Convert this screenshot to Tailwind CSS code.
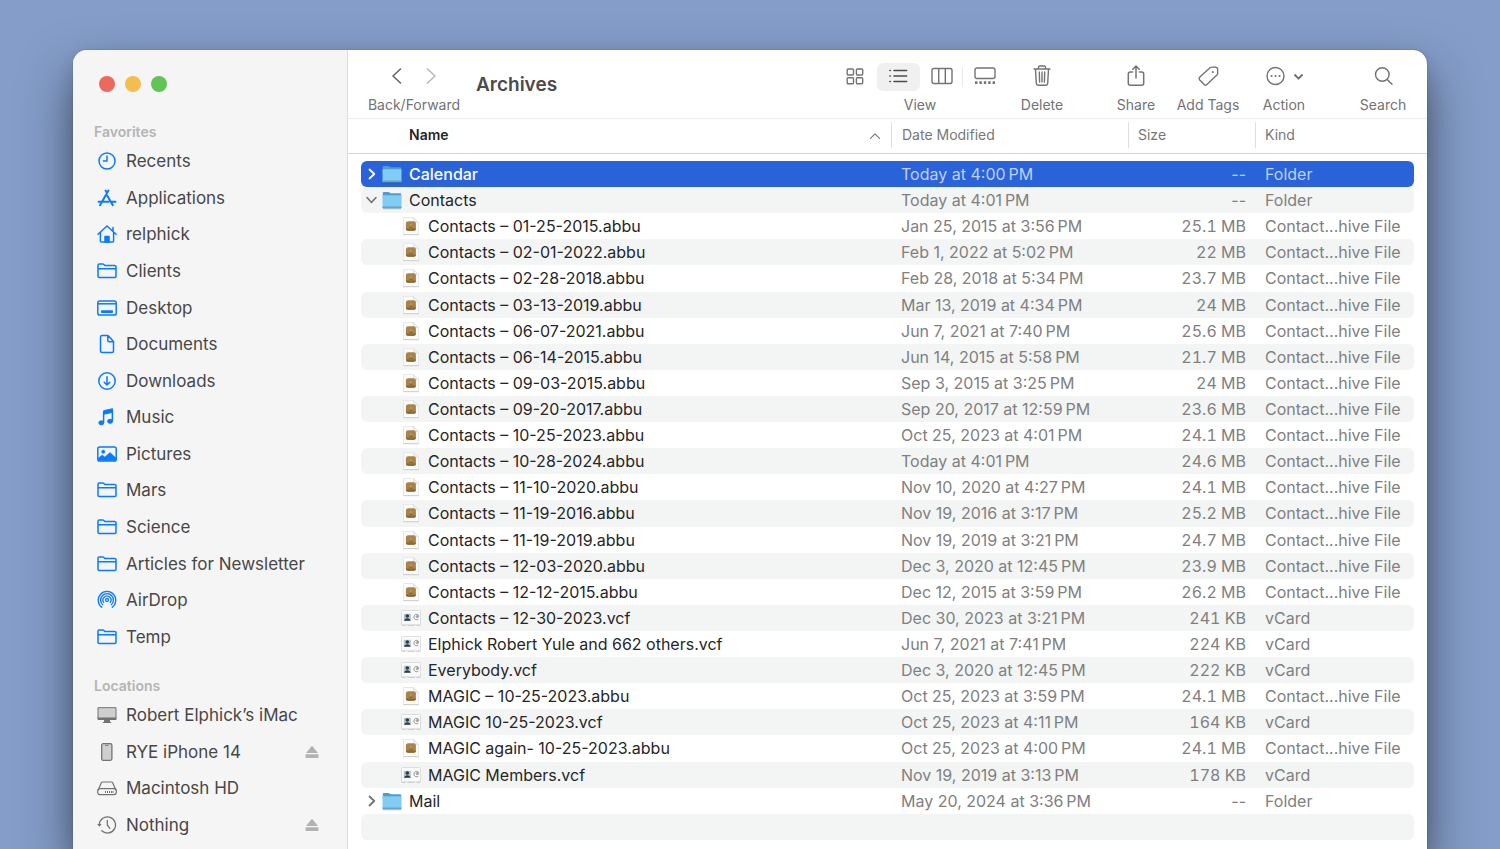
<!DOCTYPE html>
<html lang="en">
<head>
    <meta charset="UTF-8">
    <meta name="viewport" content="width=device-width, initial-scale=1.0">
    <title>Archives</title>
    <script src="https://cdn.jsdelivr.net/npm/@tailwindcss/browser@4"></script>
</head>
<body class="h-screen overflow-hidden bg-[#849dc9] px-[73px] pt-[50px] font-['Inter',sans-serif]">
    <!-- Shared icons -->
    <svg class="hidden">
        <symbol id="i-folder" viewBox="0 0 20 20"><path d="M1 15.300V4.200C1 3.400 1.500 3 2.200 3h3.600c.5 0 .8.2 1.100.5l.7.6c.2.2.5.3.8.3h9.200c.8 0 1.400.5 1.400 1.200v9.700c0 .8-.5 1.200-1.300 1.200H2.300C1.500 16.500 1 16 1 15.300ZM1 7.700h18"/></symbol>
        <symbol id="i-clock" viewBox="0 0 20 20"><circle cx="10" cy="10" r="8"/><path d="M10 4.500V10H5.800"/></symbol>
        <symbol id="i-apps" viewBox="0 0 20 20"><path d="M8.600 2.500 10 5l1.500-2.500M10 5 5.200 13.400M4.300 15 3 17.200M10.300 7.800l5.500 9.400M1.500 13.700h10M15 13.700h3.500" stroke-width="2" stroke-linecap="round"/></symbol>
        <symbol id="i-home" viewBox="0 0 20 20"><path d="M1 10.300 10 2l9 8.300M3.400 8.500v8.400c0 .6.4 1 1 1h11.200c.6 0 1-.4 1-1V8.500M16 7V3.600" stroke-linecap="round"/><path d="M8 18v-5.500h4V18Z" fill="currentColor"/></symbol>
        <symbol id="i-desktop" viewBox="0 0 20 20"><rect x=".8" y="3" width="18.400" height="14" rx="1.800"/><path d="M1 5.800h18"/><rect x="4.500" y="12.800" width="11" height="1.700" fill="currentColor" stroke-width="1"/></symbol>
        <symbol id="i-doc" viewBox="0 0 20 20"><path d="M11 1.500H5c-.9 0-1.500.6-1.500 1.500v14c0 .9.6 1.500 1.500 1.500h10c.9 0 1.500-.6 1.500-1.500V7.500ZM10.800 1.700V6.500c0 .8.400 1.200 1.200 1.200h4.300"/></symbol>
        <symbol id="i-down" viewBox="0 0 20 20"><circle cx="10" cy="10" r="8.200"/><path d="M10 5.800v8M7.200 11.200 10 14l2.800-2.800" stroke-linecap="round"/></symbol>
        <symbol id="i-music" viewBox="0 0 20 20"><path d="M6.600 3.700 15.500 1.700v3.600l-8.900 2Z" fill="currentColor" stroke-width="1"/><path d="M6.600 5v10.300M15.400 3v10.700"/><ellipse cx="4.300" cy="15.800" rx="2.500" ry="2" fill="currentColor" stroke-width="1"/><ellipse cx="13.100" cy="14.300" rx="2.500" ry="2" fill="currentColor" stroke-width="1"/></symbol>
        <symbol id="i-pic" viewBox="0 0 20 20"><rect x=".8" y="3" width="18.400" height="14" rx="1.800"/><circle cx="6.200" cy="7.700" r="1.600" fill="currentColor" stroke-width=".6"/><path d="M1 14.500 5.200 11l2.600 2L13 8.500l6 5.500v2.500H1.500Z" fill="currentColor" stroke-width=".5"/></symbol>
        <symbol id="i-airdrop" viewBox="0 0 20 20"><path d="M5.200 17.600a8.800 8.800 0 1 1 9.600 0M6 15.100a6.400 6.400 0 1 1 8 0M7 12.800a4 4 0 1 1 6 0" stroke-width="1.300"/><circle cx="10" cy="10" r="1.500" stroke-width="1.300"/></symbol>
        <symbol id="i-imac" viewBox="0 0 20 20"><path d="M1 2.700h18v10.800H1Z" fill="#cfcfcf" stroke-width="1"/><path d="M.5 12.500h19v1.700c0 .5-.4.800-.8.800h-5.900l.3 2h1v1H5.900v-1h1l.3-2H1.300c-.4 0-.8-.3-.8-.8Z" fill="currentColor" stroke="none"/></symbol>
        <symbol id="i-phone" viewBox="0 0 20 20"><rect x="4.700" y="1.700" width="10.200" height="16.600" rx="1.500" fill="#cfcfcf" stroke-width="1.300"/><path d="M8 3.300h3.600" stroke-width="1"/></symbol>
        <symbol id="i-disk" viewBox="0 0 20 20"><path d="M1 12.500 4.200 5c.3-.7.800-1 1.500-1h8.600c.7 0 1.200.3 1.500 1L19 12.500" stroke-width="1.200"/><rect x=".7" y="10.700" width="18.600" height="6" rx="2.400" stroke-width="1.200"/><path d="M8.500 13v2M10.500 13v2M12.500 13v2M14.500 13v2M16 13v2" stroke-width="1"/></symbol>
        <symbol id="i-history" viewBox="0 0 20 20"><path d="M2.300 10a8.100 8.100 0 1 1 2.500 5.800M10.300 5.300V10l2.500 3.300" stroke-width="1.300" stroke-linecap="round"/><path d="M.2 9h4.400l-2.200 2.800Z" fill="currentColor" stroke="none"/></symbol>
        <symbol id="i-eject" viewBox="0 0 14 14"><path d="M7 .8 13 8H1Z" fill="currentColor"/><rect x=".5" y="9.300" width="13" height="3.700" rx=".8" fill="currentColor"/></symbol>
        <symbol id="i-right" viewBox="0 0 12 14"><path d="M4 2.500 8.800 7 4 11.500" fill="none" stroke="currentColor" stroke-width="1.800" stroke-linecap="round" stroke-linejoin="round"/></symbol>
        <symbol id="i-open" viewBox="0 0 12 14"><path d="M1.500 4.500 6 9.500l4.500-5" fill="none" stroke="currentColor" stroke-width="1.600" stroke-linecap="round" stroke-linejoin="round"/></symbol>
        <symbol id="f-folder" viewBox="0 0 20 20"><path d="M.8 2.800c0-.6.300-.9.900-.9h4.700c.7 0 1 .3 1.500.9l.6.500h9.800c.6 0 .9.300.9.900V8H.8Z" fill="#4f9dc9"/><path d="M.5 5.200h19v12c0 .7-.3 1-1 1h-17c-.7 0-1-.3-1-1Z" fill="#82ccf4"/><path d="M.5 16.500h19v.9c0 .6-.3.900-1 .9h-17c-.7 0-1-.3-1-.9Z" fill="#5fa5cc"/><path d="M1 18.800h18" stroke="#000" stroke-opacity=".25" stroke-width=".8"/></symbol>
        <symbol id="f-abbu" viewBox="0 0 20 20"><path d="M2.500 1.500h10l5 5v12h-15Z" fill="#fcfcfc" stroke="#e2e2e2" stroke-width=".8"/><path d="M12.500 1.500v5h5Z" fill="#f0f0f0" stroke="#dadada" stroke-width=".6"/><path d="M2.300 18.700h15.400" stroke="#cdcdcd"/><rect x="4.900" y="5.200" width="10" height="9.600" rx="2.200" fill="#a98349"/><path d="M4.900 12.600h10c0 1.400-.8 2.200-2.200 2.200H7.100c-1.400 0-2.200-.8-2.200-2.200Z" fill="#8a6836"/><circle cx="9.900" cy="9" r="1.100" fill="#c09a5c"/><path d="M8 12c.3-1.800 3.500-1.800 3.800 0Z" fill="#8a6836"/></symbol>
        <symbol id="f-vcf" viewBox="0 0 20 20"><path d="M1.500 2.500h17c.6 0 1 .4 1 1V17h-4.200l-.8-1-.8 1H6.300l-.8-1-.8 1H.5V3.500c0-.6.4-1 1-1Z" fill="#fafafa" stroke="#d6d6d6" stroke-width=".8"/><path d="M.8 17.300h3.700M6.500 17.300h7M15.500 17.300h3.700" stroke="#c0c0c0" stroke-width=".8"/><rect x="2.800" y="5.800" width="7" height="7" fill="#b4c4cc"/><circle cx="6.300" cy="8" r="1.800" fill="#2b3c45"/><path d="M3.100 12.800c.2-3.400 6.200-3.400 6.400 0Z" fill="#2b3c45"/><path d="M17.300 11.200c-3 1.500-4.800-.8-4.200-3 .7-2.400 4.200-2.500 4.500-.1.100 1.500-1.300 2.100-1.200.7l.2-1.300c-1.600-.4-1.900 2.300-.7 2.100" fill="none" stroke="#777" stroke-width=".8"/></symbol>
    </svg>

    <div class="flex h-full overflow-hidden rounded-t-[14px] bg-white shadow-[0_0_1px_rgba(0,0,0,0.6),0_6px_16px_rgba(0,0,0,0.1),0_24px_50px_rgba(0,0,0,0.5)]">
        <!-- Sidebar -->
        <aside class="w-[275px] shrink-0 border-r border-[#dcdcdc] bg-[#f5f5f5] text-[#474747]">
            <div class="flex gap-[10px] pt-[26px] pl-[26px]">
                <button aria-label="Close" class="size-4 rounded-full bg-[#ed695e]"></button>
                <button aria-label="Minimize" class="size-4 rounded-full bg-[#f5bd4f]"></button>
                <button aria-label="Zoom" class="size-4 rounded-full bg-[#61c454]"></button>
            </div>
            <h2 class="mt-[31px] pl-[21px] text-sm leading-[18px] font-semibold text-[#b4b4b4]">Favorites</h2>
            <ul id="favorites" class="mt-[2px] flex h-[512px] flex-col"></ul>
            <h2 class="mt-[22px] pl-[21px] text-sm leading-[18px] font-semibold text-[#b4b4b4]">Locations</h2>
            <ul id="locations" class="mt-[2px] flex h-[146px] flex-col"></ul>
        </aside>

        <main class="min-w-0 flex-1">
            <!-- Toolbar -->
            <header class="flex h-[69px] border-b border-[#ececec] pr-5 pl-[19px] text-sm text-[#737373]">
                <div class="flex w-[94px] flex-col items-center pt-[11px]">
                    <div class="flex h-[30px] items-center gap-[14px]">
                        <button aria-label="Back"><svg class="size-5" viewBox="0 0 20 20" fill="none" stroke="#666666" stroke-width="1.600" stroke-linecap="round" stroke-linejoin="round"><path d="M13.500 3 6 10l7.500 7"/></svg></button>
                        <button aria-label="Forward"><svg class="size-5" viewBox="0 0 20 20" fill="none" stroke="#b9b9b9" stroke-width="1.600" stroke-linecap="round" stroke-linejoin="round"><path d="m6.500 3 7.500 7-7.500 7"/></svg></button>
                    </div>
                    <span class="mt-[5px] leading-[18px]">Back/Forward</span>
                </div>
                <h1 class="ml-[15px] pt-[23px] text-[19px] leading-6 font-semibold text-[#4b4b4b]">Archives</h1>

                <div class="ml-auto flex w-[172px] flex-col items-center pt-[13px]">
                    <div class="flex h-7 w-full text-[#737373]">
                        <button aria-label="Icon view" class="flex h-7 flex-1 items-center justify-center"><svg class="size-5" viewBox="0 0 20 20" fill="none" stroke="currentColor" stroke-width="1.400"><rect x="1.200" y="2" width="6.300" height="6" rx="1"/><rect x="10.400" y="2" width="6.300" height="6" rx="1"/><rect x="1.200" y="10.800" width="6.300" height="6" rx="1"/><rect x="10.400" y="10.800" width="6.300" height="6" rx="1"/></svg></button>
                        <button aria-label="List view" class="flex h-7 flex-1 items-center justify-center rounded-md bg-[#f0f0f0] text-[#4b4b4b]"><svg class="size-5" viewBox="0 0 20 20" fill="none" stroke="currentColor" stroke-width="1.600" stroke-linecap="round"><path d="M5 3.500h12.600M5 9h12.600M5 14.500h12.600M.9 3.500h.4M.9 9h.4M.9 14.500h.4"/></svg></button>
                        <button aria-label="Column view" class="relative flex h-7 flex-1 items-center justify-center after:absolute after:right-0 after:h-5 after:w-px after:bg-[#e8e8e8]"><svg class="h-5 w-[22px]" viewBox="0 0 22 20" fill="none" stroke="currentColor" stroke-width="1.400"><rect x="1" y="1.500" width="20" height="15" rx="2"/><path d="M7.700 1.500v15M14.300 1.500v15"/></svg></button>
                        <button aria-label="Gallery view" class="flex h-7 flex-1 items-center justify-center"><svg class="h-5 w-[22px]" viewBox="0 0 22 20" fill="none" stroke="currentColor" stroke-width="1.400"><rect x="1" y="1" width="20" height="10.500" rx="2"/><path d="M1 15.600h20" stroke-width="2.800" stroke-dasharray="2.400 2"/></svg></button>
                    </div>
                    <span class="mt-[5px] leading-[18px]">View</span>
                </div>

                <button class="ml-3 flex w-12 flex-col items-center pt-[11px]">
                    <svg class="my-[3px] size-6" viewBox="0 0 24 24" fill="none" stroke="currentColor" stroke-width="1.400" stroke-linecap="round" stroke-linejoin="round"><path d="M4 5h16M8.500 4.800V3.300c0-.8.500-1.300 1.300-1.300h4.400c.8 0 1.300.5 1.300 1.300v1.500M5.500 5.200l.8 14.300c.1 1.100.7 1.700 1.800 1.700h7.800c1.100 0 1.700-.6 1.800-1.700l.8-14.300M9.300 8l.3 10M12 8v10M14.700 8l-.3 10"/></svg>
                    <span class="mt-[5px] leading-[18px]">Delete</span>
                </button>
                <button class="ml-[46px] flex w-12 flex-col items-center pt-[11px]">
                    <svg class="my-[3px] size-6" viewBox="0 0 24 24" fill="none" stroke="currentColor" stroke-width="1.500" stroke-linecap="round" stroke-linejoin="round"><path d="M8.500 8H6.300C5 8 4.300 8.700 4.300 10v9.200c0 1.300.7 2 2 2h11.400c1.300 0 2-.7 2-2V10c0-1.300-.7-2-2-2h-2.200M12 14V2.200M8.800 5.200 12 2l3.200 3.200"/></svg>
                    <span class="mt-[5px] leading-[18px]">Share</span>
                </button>
                <button class="ml-3 flex w-[72px] flex-col items-center pt-[11px]">
                    <svg class="my-[3px] size-6" viewBox="0 0 24 24" fill="none" stroke="currentColor" stroke-width="1.400" stroke-linejoin="round"><path d="M14.300 3.500 3.600 13.300c-.8.800-.8 1.500-.1 2.400l4.700 4.900c.8.900 1.600.9 2.400.1L20.900 11c.6-.6.800-1.100.8-1.900l-.1-3.900c0-1.200-.6-1.900-1.800-1.900l-3.600-.2c-.8 0-1.300-.1-1.900.4Z"/><circle cx="16.800" cy="8" r="1" fill="currentColor" stroke="none"/></svg>
                    <span class="mt-[5px] leading-[18px] whitespace-nowrap">Add Tags</span>
                </button>
                <button class="ml-4 flex w-12 flex-col items-center pt-[11px]">
                    <svg class="my-[3px] h-6 w-10" viewBox="0 0 40 24" fill="none" stroke="currentColor" stroke-width="1.400" stroke-linecap="round" stroke-linejoin="round"><circle cx="11.500" cy="12" r="8.500"/><path d="M7.500 12h.1M11.500 12h.1M15.500 12h.1" stroke-width="2"/><path d="m31 11 3.500 3.700L38 11" stroke-width="1.900"/></svg>
                    <span class="mt-[5px] leading-[18px]">Action</span>
                </button>
                <button class="ml-[51px] flex w-12 flex-col items-center pt-[11px]">
                    <svg class="my-[3px] size-6" viewBox="0 0 24 24" fill="none" stroke="currentColor" stroke-width="1.500" stroke-linecap="round"><circle cx="11.300" cy="10.500" r="6.800"/><path d="m16.200 15.500 4.800 4.700"/></svg>
                    <span class="mt-[5px] leading-[18px]">Search</span>
                </button>
            </header>

            <!-- Column headings. The outer columns keep the rounded rows off the edges. -->
            <table class="w-full table-fixed text-left text-sm leading-[18px] whitespace-nowrap text-[#777777]">
                <colgroup>
                    <col class="w-[13px]"><col><col class="w-[237px]"><col class="w-[127px]"><col class="w-[159px]"><col class="w-[13px]">
                </colgroup>
                <thead>
                    <tr class="*:border-b *:border-[#d6d6d6] *:pt-[3px] *:pb-[5px] *:font-normal">
                        <td></td>
                        <th class="pl-12">
                            <div class="flex items-center justify-between pr-[10px]">
                                <span class="font-semibold text-[#262626]">Name</span>
                                <svg class="size-3" viewBox="0 0 12 12" fill="none" stroke="currentColor" stroke-width="1.200" stroke-linecap="round" stroke-linejoin="round"><path d="M1.500 9.300 6 4.800l4.500 4.500"/></svg>
                            </div>
                        </th>
                        <th><div class="border-l border-[#dedede] py-1 pl-[10px]">Date Modified</div></th>
                        <th><div class="border-l border-[#dedede] py-1 pl-[9px]">Size</div></th>
                        <th><div class="border-l border-[#dedede] py-1 pl-[9px]">Kind</div></th>
                        <td></td>
                    </tr>
                </thead>
            </table>
            <table class="mt-[7px] h-[679px] w-full table-fixed text-left text-base leading-[18px] whitespace-nowrap">
                <colgroup>
                    <col class="w-[13px]"><col><col class="w-[237px]"><col class="w-[127px]"><col class="w-[159px]"><col class="w-[13px]">
                </colgroup>
                <tbody id="files"></tbody>
            </table>
        </main>
    </div>

    <script>
        const favorites = [
            ['clock', 'Recents'], ['apps', 'Applications'], ['home', 'relphick'], ['folder', 'Clients'],
            ['desktop', 'Desktop'], ['doc', 'Documents'], ['down', 'Downloads'], ['music', 'Music'],
            ['pic', 'Pictures'], ['folder', 'Mars'], ['folder', 'Science'], ['folder', 'Articles for Newsletter'],
            ['airdrop', 'AirDrop'], ['folder', 'Temp']
        ];
        const locations = [
            ['imac', 'Robert Elphick’s iMac'], ['phone', 'RYE iPhone 14', true],
            ['disk', 'Macintosh HD'], ['history', 'Nothing', true]
        ];

        const files = [
            ['Calendar', 'Today at 4:00 PM', '--', 'dir'],
            ['Contacts', 'Today at 4:01 PM', '--', 'dir'],
            ['Contacts – 01-25-2015.abbu', 'Jan 25, 2015 at 3:56 PM', '25.1 MB', 'abbu'],
            ['Contacts – 02-01-2022.abbu', 'Feb 1, 2022 at 5:02 PM', '22 MB', 'abbu'],
            ['Contacts – 02-28-2018.abbu', 'Feb 28, 2018 at 5:34 PM', '23.7 MB', 'abbu'],
            ['Contacts – 03-13-2019.abbu', 'Mar 13, 2019 at 4:34 PM', '24 MB', 'abbu'],
            ['Contacts – 06-07-2021.abbu', 'Jun 7, 2021 at 7:40 PM', '25.6 MB', 'abbu'],
            ['Contacts – 06-14-2015.abbu', 'Jun 14, 2015 at 5:58 PM', '21.7 MB', 'abbu'],
            ['Contacts – 09-03-2015.abbu', 'Sep 3, 2015 at 3:25 PM', '24 MB', 'abbu'],
            ['Contacts – 09-20-2017.abbu', 'Sep 20, 2017 at 12:59 PM', '23.6 MB', 'abbu'],
            ['Contacts – 10-25-2023.abbu', 'Oct 25, 2023 at 4:01 PM', '24.1 MB', 'abbu'],
            ['Contacts – 10-28-2024.abbu', 'Today at 4:01 PM', '24.6 MB', 'abbu'],
            ['Contacts – 11-10-2020.abbu', 'Nov 10, 2020 at 4:27 PM', '24.1 MB', 'abbu'],
            ['Contacts – 11-19-2016.abbu', 'Nov 19, 2016 at 3:17 PM', '25.2 MB', 'abbu'],
            ['Contacts – 11-19-2019.abbu', 'Nov 19, 2019 at 3:21 PM', '24.7 MB', 'abbu'],
            ['Contacts – 12-03-2020.abbu', 'Dec 3, 2020 at 12:45 PM', '23.9 MB', 'abbu'],
            ['Contacts – 12-12-2015.abbu', 'Dec 12, 2015 at 3:59 PM', '26.2 MB', 'abbu'],
            ['Contacts – 12-30-2023.vcf', 'Dec 30, 2023 at 3:21 PM', '241 KB', 'vcf'],
            ['Elphick Robert Yule and 662 others.vcf', 'Jun 7, 2021 at 7:41 PM', '224 KB', 'vcf'],
            ['Everybody.vcf', 'Dec 3, 2020 at 12:45 PM', '222 KB', 'vcf'],
            ['MAGIC – 10-25-2023.abbu', 'Oct 25, 2023 at 3:59 PM', '24.1 MB', 'abbu'],
            ['MAGIC 10-25-2023.vcf', 'Oct 25, 2023 at 4:11 PM', '164 KB', 'vcf'],
            ['MAGIC again- 10-25-2023.abbu', 'Oct 25, 2023 at 4:00 PM', '24.1 MB', 'abbu'],
            ['MAGIC Members.vcf', 'Nov 19, 2019 at 3:13 PM', '178 KB', 'vcf'],
            ['Mail', 'May 20, 2024 at 3:36 PM', '--', 'dir'],
            ['', '', '', '']
        ];
        const kinds = { dir: 'Folder', abbu: 'Contact...hive File', vcf: 'vCard', '': '' };

        function sidebarItem([icon, label, eject], color) {
            return `<li class="flex min-h-0 flex-1 items-center pr-7 pl-6">
                <a href="#" class="flex flex-1 items-center gap-[9px] text-[17px] leading-5">
                    <svg class="size-5 ${color}" fill="none" stroke="currentColor" stroke-width="1.5" stroke-linejoin="round"><use href="#i-${icon}"/></svg>${label}</a>
                ${eject ? '<button aria-label="Eject" class="text-[#b2b2b2]"><svg class="size-[14px]"><use href="#i-eject"/></svg></button>' : ''}
            </li>`;
        }

        function nameCell(name, type, selected) {
            if (!type) return '';
            if (type !== 'dir') {
                return `<div class="flex items-center gap-[7px] pl-10"><svg class="size-5"><use href="#f-${type}"/></svg>${name}</div>`;
            }
            const arrow = name === 'Contacts' ? 'open' : 'right';
            return `<div class="flex items-center pl-1">
                <button aria-label="Toggle ${name}" class="${selected ? 'text-white' : 'text-[#737373]'}"><svg class="h-[14px] w-[13px]"><use href="#i-${arrow}"/></svg></button>
                <svg class="mr-[7px] ml-1 size-5"><use href="#f-folder"/></svg>${name}</div>`;
        }

        function fileRow([name, date, size, type], i) {
            const selected = i === 0;
            const bg = selected ? 'bg-[#2962d9]' : i % 2 ? 'bg-[#f3f5f5]' : '';
            const dim = selected ? 'text-[#bfd1f6]' : 'text-[#808080]';
            return `<tr class="h-[26px]">
                <td></td>
                <td class="rounded-l-md ${bg} ${selected ? 'font-medium text-white' : 'text-[#262626]'}">${nameCell(name, type, selected)}</td>
                <td class="pl-[10px] ${bg} ${dim}">${date.replace(/ PM$/, '\u202fPM')}</td>
                <td class="pr-[9px] text-right ${type === 'dir' ? '' : 'tabular-nums'} ${bg} ${dim}">${size}</td>
                <td class="rounded-r-md pl-[10px] ${bg} ${dim}">${kinds[type]}</td>
                <td></td>
            </tr>`;
        }

        document.getElementById('favorites').innerHTML = favorites.map(f => sidebarItem(f, 'text-[#0a7aff]')).join('');
        document.getElementById('locations').innerHTML = locations.map(l => sidebarItem(l, 'text-[#737373]')).join('');
        document.getElementById('files').innerHTML = files.map(fileRow).join('');
    </script>
</body>
</html>
